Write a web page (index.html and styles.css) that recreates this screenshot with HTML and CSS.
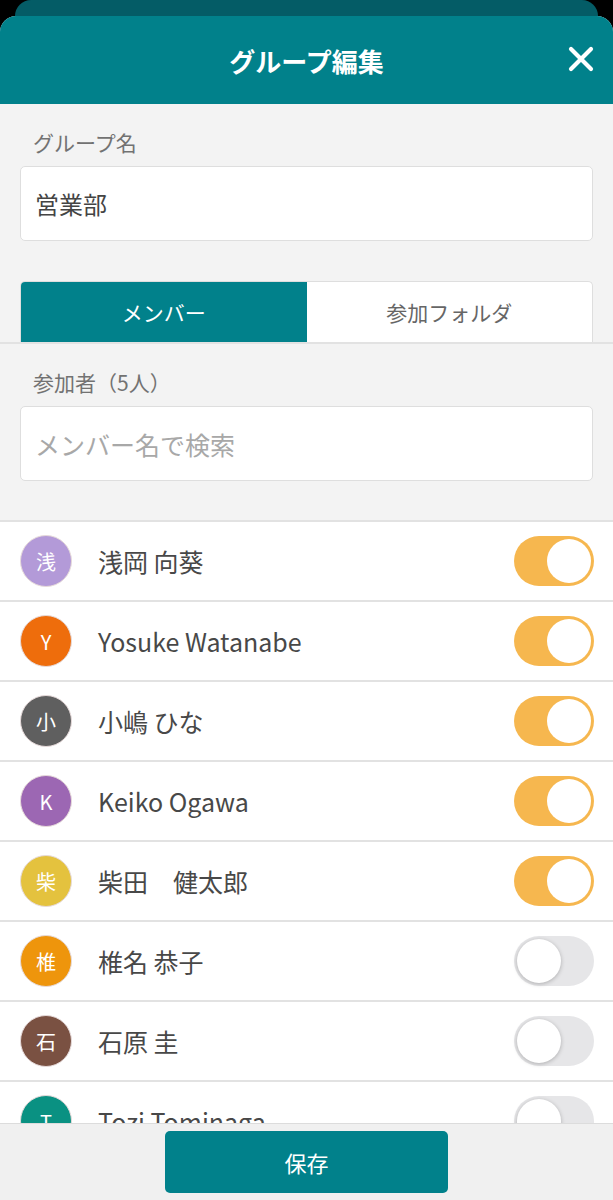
FILE: index.html
```html
<!DOCTYPE html>
<html lang="ja">
<head>
    <meta charset="UTF-8">
    <meta name="viewport" content="width=device-width, initial-scale=1.0">
    <title>グループ編集</title>
    <link rel="stylesheet" href="styles.css">
</head>
<body>
    <div class="back-sheet"></div>

    <div class="sheet">
        <header class="sheet-header">
            <h1>グループ編集</h1>
            <button class="close-button" aria-label="閉じる">
                <svg width="26" height="26" viewBox="0 0 26 26">
                    <path d="M3 3 L23 23 M23 3 L3 23" stroke="#fff" stroke-width="4.2" stroke-linecap="round"/>
                </svg>
            </button>
        </header>

        <div class="sheet-body">
            <section class="group-section">
                <label class="field-label">グループ名</label>
                <div class="text-box">営業部</div>

                <div class="tabs">
                    <div class="tab active">メンバー</div>
                    <div class="tab">参加フォルダ</div>
                </div>
            </section>

            <section class="member-section">
                <label class="field-label">参加者（5人）</label>
                <div class="text-box placeholder">メンバー名で検索</div>
            </section>

            <ul class="member-list">
                <li class="member">
                    <span class="avatar" style="background:#b39ad8">浅</span>
                    <span class="name">浅岡 向葵</span>
                    <span class="switch on"></span>
                </li>
                <li class="member">
                    <span class="avatar" style="background:#ee6d0c">Y</span>
                    <span class="name">Yosuke Watanabe</span>
                    <span class="switch on"></span>
                </li>
                <li class="member">
                    <span class="avatar" style="background:#5f5f5f">小</span>
                    <span class="name">小嶋 ひな</span>
                    <span class="switch on"></span>
                </li>
                <li class="member">
                    <span class="avatar" style="background:#9c67b3">K</span>
                    <span class="name">Keiko Ogawa</span>
                    <span class="switch on"></span>
                </li>
                <li class="member">
                    <span class="avatar" style="background:#e4c23e">柴</span>
                    <span class="name">柴田　健太郎</span>
                    <span class="switch on"></span>
                </li>
                <li class="member">
                    <span class="avatar" style="background:#ee950c">椎</span>
                    <span class="name">椎名 恭子</span>
                    <span class="switch"></span>
                </li>
                <li class="member">
                    <span class="avatar" style="background:#7a5142">石</span>
                    <span class="name">石原 圭</span>
                    <span class="switch"></span>
                </li>
                <li class="member">
                    <span class="avatar" style="background:#0a9182">T</span>
                    <span class="name">Tozi Tominaga</span>
                    <span class="switch"></span>
                </li>
            </ul>
        </div>

        <footer class="sheet-footer">
            <button class="save-button">保存</button>
        </footer>
    </div>
</body>
</html>
```

FILE: styles.css
```css
body {
    font-family: "Noto Sans CJK JP", "Noto Sans", sans-serif;
    background: #000;
    margin: 0;
    padding: 0;
    height: 100vh;
    display: flex;
    flex-direction: column;
    overflow: hidden;
    color: #444;
}

h1, p, ul {
    margin: 0;
    padding: 0;
}

.back-sheet {
    height: 16px;
    margin: 0 15px;
    background: #045c66;
    border-radius: 16px 16px 0 0;
    flex-shrink: 0;
}

.sheet {
    flex: 1;
    display: flex;
    flex-direction: column;
    background: #f3f3f3;
    border-radius: 16px 16px 0 0;
    overflow: hidden;
    min-height: 0;
}

.sheet-header {
    height: 88px;
    flex-shrink: 0;
    background: #01818b;
    display: flex;
    align-items: center;
    justify-content: center;
    position: relative;
}

.sheet-header h1 {
    color: #fff;
    font-size: 26px;
    font-weight: bold;
}

.close-button {
    position: absolute;
    right: 19px;
    top: 30px;
    background: none;
    border: none;
    padding: 0;
    width: 26px;
    height: 26px;
    display: flex;
}

.sheet-body {
    flex: 1;
    overflow: hidden;
    min-height: 0;
}

.group-section {
    padding: 24px 20px 0;
    border-bottom: 2px solid #e2e2e2;
}

.member-section {
    padding: 24px 20px 39px;
}

.field-label {
    display: block;
    font-size: 21px;
    line-height: 28px;
    color: #727272;
    padding-left: 13px;
    margin-bottom: 10px;
}

.text-box {
    height: 73px;
    background: #fff;
    border: 1px solid #dedede;
    border-radius: 5px;
    display: flex;
    align-items: center;
    padding: 0 14px;
    font-size: 24px;
    color: #444;
}

.text-box.placeholder {
    color: #a8a8a8;
    font-size: 25px;
}

.tabs {
    display: flex;
    margin-top: 40px;
    height: 60px;
    border: 1px solid #dedede;
    border-bottom: none;
    border-radius: 5px 5px 0 0;
    overflow: hidden;
    background: #fff;
}

.tab {
    flex: 1;
    display: flex;
    align-items: center;
    justify-content: center;
    font-size: 21px;
    color: #666;
}

.tab.active {
    background: #01818b;
    color: #fff;
}

.member-list {
    list-style: none;
    background: #fff;
    border-top: 2px solid #e2e2e2;
}

.member {
    height: 78px;
    border-bottom: 2px solid #e2e2e2;
    display: flex;
    align-items: center;
    padding: 0 19px 0 20px;
}

.avatar {
    width: 50px;
    height: 50px;
    border-radius: 50%;
    border: 1px solid #e6dada;
    display: flex;
    align-items: center;
    justify-content: center;
    color: #fff;
    font-size: 20px;
    flex-shrink: 0;
}

.name {
    flex: 1;
    margin-left: 26px;
    font-size: 25px;
    color: #484848;
}

.switch {
    width: 80px;
    height: 50px;
    border-radius: 25px;
    background: #e6e6e8;
    position: relative;
    flex-shrink: 0;
}

.switch::after {
    content: "";
    position: absolute;
    top: 3px;
    left: 3px;
    width: 44px;
    height: 44px;
    border-radius: 50%;
    background: #fff;
    box-shadow: 0 1px 4px rgba(0, 0, 0, 0.25);
}

.switch.on {
    background: #f6b74f;
}

.switch.on::after {
    left: 33px;
    box-shadow: none;
}

.sheet-footer {
    height: 77px;
    flex-shrink: 0;
    background: #f0f0f0;
    border-top: 1px solid #dcdcdc;
    display: flex;
    justify-content: center;
    padding-top: 7px;
    box-sizing: border-box;
}

.save-button {
    width: 283px;
    height: 62px;
    background: #01818b;
    border: none;
    border-radius: 5px;
    color: #fff;
    font-family: inherit;
    font-size: 22px;
}
```
